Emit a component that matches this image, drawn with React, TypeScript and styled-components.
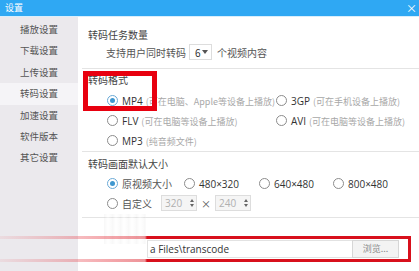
import React from "react";
import styled, { createGlobalStyle } from "styled-components";

const GlobalStyle = createGlobalStyle`
  html, body {
    margin: 0;
    padding: 0;
    background: #ffffff;
  }
  body {
    font-family: "Noto Sans CJK SC", "Noto Sans", sans-serif;
    font-size: 10px;
    color: #444444;
  }
`;

const Window = styled.div`
  position: relative;
  width: 419px;
  height: 271px;
  overflow: hidden;
  display: flex;
  flex-direction: column;
  background: #ffffff;
`;

const TitleBar = styled.div`
  height: 16px;
  flex-shrink: 0;
  display: flex;
  align-items: center;
  justify-content: space-between;
  padding: 0 0 0 5px;
  background: #2fa8f3;
  border-bottom: 1px solid #d8eefc;
  color: #ffffff;
  font-size: 9px;
  line-height: 16px;
`;

const CloseMark = styled.span`
  font-size: 11px;
  margin-right: 2px;
  color: #ffffff;
`;

const Body = styled.div`
  flex: 1;
  display: flex;
  min-height: 0;
`;

const Sidebar = styled.ul`
  width: 78px;
  flex-shrink: 0;
  margin: 0;
  padding: 2px 0 0;
  list-style: none;
  background: #ebe9ed;
  display: flex;
  flex-direction: column;
`;

const NavItem = styled.li<{ $active?: boolean }>`
  height: 21.4px;
  line-height: 21.4px;
  padding-left: 20px;
  font-size: 9.5px;
  color: #555555;
  background: ${(p) => (p.$active ? "#f5f4f7" : "transparent")};
`;

const Content = styled.div`
  flex: 1;
  padding-left: 4px;
  display: flex;
  flex-direction: column;
`;

const Section = styled.div<{ $top: number; $bottom: number; $gap: number; $line?: boolean }>`
  display: flex;
  flex-direction: column;
  gap: ${(p) => p.$gap}px;
  padding: ${(p) => p.$top}px 7px ${(p) => p.$bottom}px 6px;
  border-bottom: ${(p) => (p.$line ? "1px solid #e4e4e4" : "none")};
`;

const SectionTitle = styled.div`
  height: 16px;
  line-height: 16px;
  color: #444444;
`;

const Row = styled.div<{ $indent?: number }>`
  height: 16px;
  display: flex;
  align-items: center;
  padding-left: ${(p) => p.$indent ?? 19}px;
  color: #555555;
  white-space: nowrap;
`;

const Select = styled.span`
  display: inline-flex;
  align-items: center;
  justify-content: space-between;
  box-sizing: border-box;
  width: 23px;
  height: 16px;
  margin: 0 5px 0 3px;
  padding: 0 3px 0 5px;
  border: 1px solid #dddddd;
  color: #333333;
`;

const Caret = styled.span`
  width: 0;
  height: 0;
  border-left: 3px solid transparent;
  border-right: 3px solid transparent;
  border-top: 4px solid #555555;
`;

const Option = styled.label<{ $width?: number }>`
  display: inline-flex;
  align-items: center;
  gap: 4px;
  width: ${(p) => (p.$width ? `${p.$width}px` : "auto")};
  flex-shrink: 0;
  overflow: hidden;
`;

const Radio = styled.span<{ $checked?: boolean }>`
  position: relative;
  box-sizing: border-box;
  width: 11px;
  height: 11px;
  border-radius: 50%;
  border: 1px solid ${(p) => (p.$checked ? "#6aa9d6" : "#8c8c8c")};
  background: #ffffff;
  flex-shrink: 0;
  &::after {
    content: "";
    display: ${(p) => (p.$checked ? "block" : "none")};
    position: absolute;
    left: 2px;
    top: 2px;
    width: 5px;
    height: 5px;
    border-radius: 50%;
    background: #3f97cf;
  }
`;

const Format = styled.span`
  color: #333333;
  font-family: "Open Sans", "Noto Sans CJK SC", sans-serif;
  font-size: 10px;
`;

const Hint = styled.span`
  color: #a8a8a8;
  margin-left: 3px;
  font-size: 9px;
`;

const Spin = styled.span`
  display: inline-flex;
  align-items: center;
  justify-content: space-between;
  box-sizing: border-box;
  width: 36px;
  height: 16px;
  padding: 0 2px 0 3px;
  background: #f5f5f5;
  border: 1px solid #dddddd;
  color: #b0b0b0;
  font-family: "Open Sans", sans-serif;
`;

const SpinArrows = styled.span`
  display: flex;
  flex-direction: column;
  gap: 2px;
  &::before,
  &::after {
    content: "";
    width: 0;
    height: 0;
    border-left: 2px solid transparent;
    border-right: 2px solid transparent;
  }
  &::before {
    border-bottom: 3px solid #666666;
  }
  &::after {
    border-top: 3px solid #666666;
  }
`;

const Times = styled.span`
  margin: 0 4px;
  color: #555555;
`;

const PathRow = styled.div`
  height: 18px;
  display: flex;
  padding-left: 59px;
`;

const PathInput = styled.div`
  width: 205px;
  box-sizing: border-box;
  padding-left: 2px;
  line-height: 17px;
  border: 1px solid #e2e2e2;
  border-right: none;
  color: #333333;
  font-family: "Open Sans", sans-serif;
  font-size: 10px;
`;

const BrowseButton = styled.div`
  width: 47px;
  box-sizing: border-box;
  line-height: 16px;
  text-align: center;
  background: #f3f3f3;
  border: 1px solid #d6d6d6;
  color: #8a8a8a;
  font-size: 9px;
`;

const MarkBox = styled.div`
  position: absolute;
  left: 83px;
  top: 71px;
  width: 74px;
  height: 40px;
  box-sizing: border-box;
  border: 5px solid #e8000f;
  pointer-events: none;
`;

const SmearLine = styled.div<{ $top: number }>`
  position: absolute;
  left: 0;
  top: ${(p) => p.$top}px;
  width: 411px;
  height: 3px;
  background: linear-gradient(
    to right,
    rgba(230, 60, 70, 0.08) 0px,
    rgba(230, 60, 70, 0.45) 110px,
    rgba(220, 40, 50, 0.5) 145px,
    #d8101c 147px,
    #d8101c 100%
  );
  pointer-events: none;
`;

const SmearEdge = styled.div`
  position: absolute;
  left: 408px;
  top: 236px;
  width: 3px;
  height: 26px;
  background: #d8101c;
  pointer-events: none;
`;

const Haze = styled.div`
  position: absolute;
  left: 104px;
  top: 214px;
  width: 42px;
  height: 30px;
  background: repeating-linear-gradient(
    to right,
    rgba(190, 190, 190, 0.12) 0px,
    rgba(255, 255, 255, 0.4) 4px,
    rgba(200, 200, 200, 0.1) 8px
  );
  pointer-events: none;
`;

const navItems = ["播放设置", "下载设置", "上传设置", "转码设置", "加速设置", "软件版本", "其它设置"];

export default function App() {
  return (
    <Window>
      <GlobalStyle />
      <TitleBar>
        <span>设置</span>
        <CloseMark>×</CloseMark>
      </TitleBar>
      <Body>
        <Sidebar>
          {navItems.map((item) => (
            <NavItem key={item} $active={item === "转码设置"}>
              {item}
            </NavItem>
          ))}
        </Sidebar>
        <Content>
          <Section $top={10} $bottom={8} $gap={1} $line>
            <SectionTitle>转码任务数量</SectionTitle>
            <Row $indent={18}>
              支持用户同时转码
              <Select>
                6<Caret />
              </Select>
              个视频内容
            </Row>
          </Section>

          <Section $top={3} $bottom={3} $gap={4} $line>
            <SectionTitle>转码格式</SectionTitle>
            <Row>
              <Option $width={169}>
                <Radio $checked />
                <span>
                  <Format>MP4</Format>
                  <Hint>(可在电脑、Apple等设备上播放)</Hint>
                </span>
              </Option>
              <Option>
                <Radio />
                <span>
                  <Format>3GP</Format>
                  <Hint>(可在手机设备上播放)</Hint>
                </span>
              </Option>
            </Row>
            <Row>
              <Option $width={169}>
                <Radio />
                <span>
                  <Format>FLV</Format>
                  <Hint>(可在电脑等设备上播放)</Hint>
                </span>
              </Option>
              <Option>
                <Radio />
                <span>
                  <Format>AVI</Format>
                  <Hint>(可在电脑等设备上播放)</Hint>
                </span>
              </Option>
            </Row>
            <Row>
              <Option>
                <Radio />
                <span>
                  <Format>MP3</Format>
                  <Hint>(纯音频文件)</Hint>
                </span>
              </Option>
            </Row>
          </Section>

          <Section $top={4} $bottom={6} $gap={3.5} $line>
            <SectionTitle>转码画面默认大小</SectionTitle>
            <Row>
              <Option $width={77}>
                <Radio $checked />
                <span>原视频大小</span>
              </Option>
              <Option $width={75}>
                <Radio />
                <Format>480×320</Format>
              </Option>
              <Option $width={74}>
                <Radio />
                <Format>640×480</Format>
              </Option>
              <Option>
                <Radio />
                <Format>800×480</Format>
              </Option>
            </Row>
            <Row>
              <Option $width={54}>
                <Radio />
                <span>自定义</span>
              </Option>
              <Spin>
                320
                <SpinArrows />
              </Spin>
              <Times>×</Times>
              <Spin>
                240
                <SpinArrows />
              </Spin>
            </Row>
          </Section>

          <Section $top={22} $bottom={0} $gap={0}>
            <PathRow>
              <PathInput>a Files\transcode</PathInput>
              <BrowseButton>浏览...</BrowseButton>
            </PathRow>
          </Section>
        </Content>
      </Body>
      <MarkBox />
      <Haze />
      <SmearLine $top={236} />
      <SmearLine $top={259} />
      <SmearEdge />
    </Window>
  );
}
